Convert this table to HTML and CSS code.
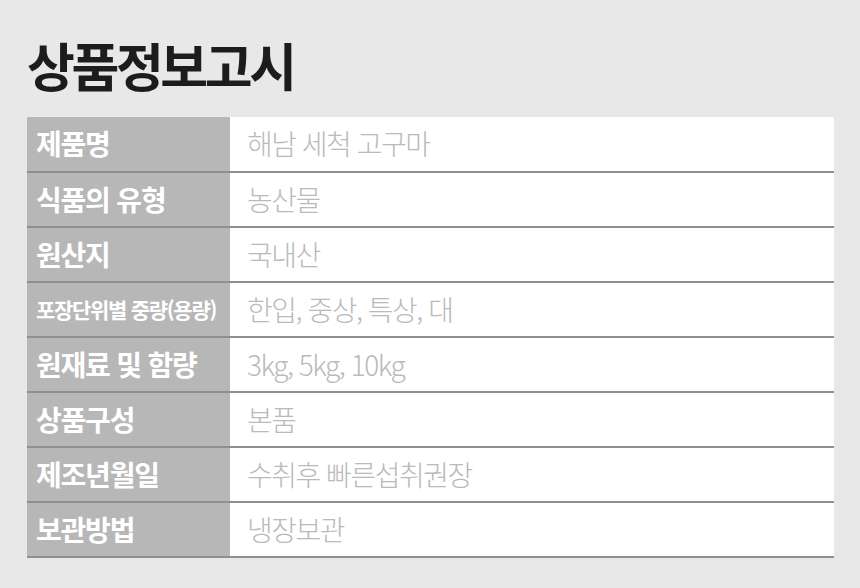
FILE: index.html
```html
<!DOCTYPE html>
<html lang="ko">
<head>
<meta charset="utf-8">
<link rel="stylesheet" href="styles.css">
</head>
<body>
<main class="page">
  <h1 class="title">상품정보고시</h1>
  <table class="info">
    <tr><th>제품명</th><td>해남 세척 고구마</td></tr>
    <tr><th>식품의 유형</th><td>농산물</td></tr>
    <tr><th>원산지</th><td>국내산</td></tr>
    <tr><th class="small">포장단위별 중량(용량)</th><td>한입, 중상, 특상, 대</td></tr>
    <tr><th>원재료 및 함량</th><td>3kg, 5kg, 10kg</td></tr>
    <tr><th>상품구성</th><td>본품</td></tr>
    <tr><th>제조년월일</th><td>수취후 빠른섭취권장</td></tr>
    <tr><th>보관방법</th><td>냉장보관</td></tr>
  </table>
</main>
</body>
</html>
```
FILE: styles.css
```css
* { box-sizing: border-box; }
html, body { margin: 0; padding: 0; }
body {
  background: #e8e8e8;
  width: 860px;
  height: 588px;
  overflow: hidden;
  font-family: "Noto Sans CJK KR", "Noto Sans", sans-serif;
}
.page {
  padding: 0 26px 0 27px;
}
.title {
  margin: 0;
  height: 117px;
  padding-top: 33px;
  font-size: 52px;
  line-height: 64px;
  font-weight: 700;
  letter-spacing: -3.4px;
  color: #1c1c1c;
}
.info {
  width: 807px;
  border-collapse: collapse;
}
.info tr {
  border-bottom: 2px solid #8f8f8f;
}
.info th {
  width: 203px;
  height: 55px;
  padding: 0 0 2px 9px;
  background: #b7b7b7;
  color: #ffffff;
  text-align: left;
  font-size: 28px;
  font-weight: 700;
  letter-spacing: -1.2px;
  white-space: nowrap;
}
.info th.small {
  font-size: 21px;
  letter-spacing: -1.3px;
}
.info td {
  background: #ffffff;
  padding: 0 0 2px 17px;
  color: #bababa;
  font-size: 28px;
  font-weight: 300;
  letter-spacing: -1.5px;
  white-space: nowrap;
}
```
